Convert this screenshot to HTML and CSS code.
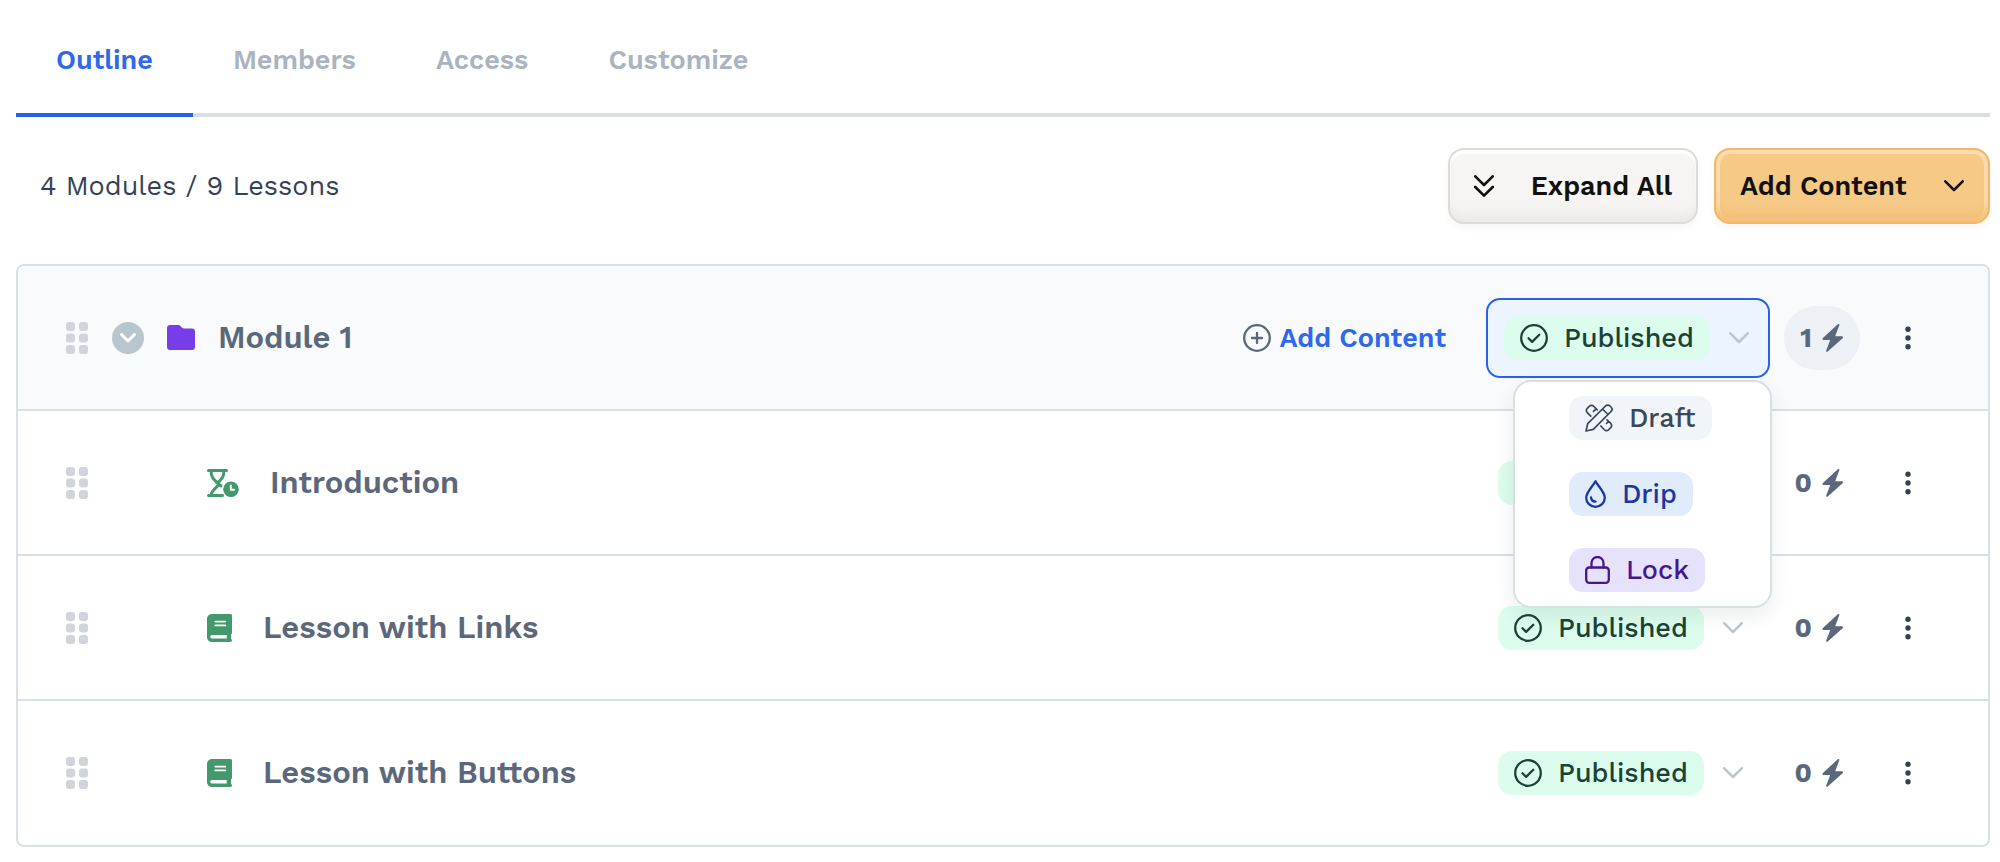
FILE: index.html
```html
<!DOCTYPE html>
<html lang="en">

<head>
  <meta charset="utf-8">
  <title>Outline</title>
  <link rel="stylesheet" href="styles.css">
</head>

<body>
  <!-- shared icons -->
  <svg class="sprite" aria-hidden="true">
    <symbol id="grip" viewBox="0 0 22 32">
      <rect x="0" y="0" width="9" height="9" rx="3" />
      <rect x="13" y="0" width="9" height="9" rx="3" />
      <rect x="0" y="11.5" width="9" height="9" rx="3" />
      <rect x="13" y="11.5" width="9" height="9" rx="3" />
      <rect x="0" y="23" width="9" height="9" rx="3" />
      <rect x="13" y="23" width="9" height="9" rx="3" />
    </symbol>
    <symbol id="check" viewBox="0 0 28 28">
      <circle cx="14" cy="14" r="12.8" />
      <path d="M8.500 14.300l3.600 3.600 7.200-7.200" />
    </symbol>
    <symbol id="chevron" viewBox="0 0 20 12">
      <path d="M1.300 1.300L10 10l8.700-8.700" />
    </symbol>
    <symbol id="bolt" viewBox="0 0 22 28">
      <path d="M17.300 1.200c.4-1-.7-1.700-1.500-1L.9 14.100c-.8.800-.4 2 .8 2h6.500l-4 10.500c-.4 1 .7 1.700 1.500 1l14.900-13.400c.8-.8.4-2-.8-2h-6.600z" />
    </symbol>
    <symbol id="dots" viewBox="0 0 6 24">
      <circle cx="3" cy="3.200" r="2.700" />
      <circle cx="3" cy="12" r="2.700" />
      <circle cx="3" cy="20.800" r="2.700" />
    </symbol>
    <symbol id="book" viewBox="0 0 25 28">
      <path fill-rule="evenodd" d="M5 0h18.300C24.300 0 25 .7 25 1.600v17.300c0 .7-.4 1.200-1 1.400v4.600c.6.2 1 .8 1 1.400 0 1-.7 1.700-1.700 1.700H5c-2.800 0-5-2.200-5-5V5c0-2.800 2.200-5 5-5zM8.300 6.700a.9.9 0 0 0 0 1.800h10a.9.9 0 0 0 0-1.800zm0 3.800a.9.9 0 0 0 0 1.800h10a.9.9 0 0 0 0-1.800zM5 21a1.800 1.800 0 0 0 0 3.600h14.700V21z" />
    </symbol>
  </svg>

  <nav class="tabs">
    <a class="tab active" href="#outline">Outline</a>
    <a class="tab" href="#members">Members</a>
    <a class="tab" href="#access">Access</a>
    <a class="tab" href="#customize">Customize</a>
  </nav>

  <div class="toolbar">
    <div class="summary">4 Modules / 9 Lessons</div>
    <button class="btn btn-expand" type="button">
      <svg class="icon-double" viewBox="0 0 20 22"><path d="M1.300 1.300L10 10l8.700-8.700M1.300 12L10 20.700l8.700-8.700" /></svg>
      Expand All
    </button>
    <button class="btn btn-add" type="button">
      Add Content
      <svg class="icon-chevron"><use href="#chevron" /></svg>
    </button>
  </div>

  <main class="outline">
    <div class="row module">
      <svg class="grip"><use href="#grip" /></svg>
      <button class="toggle" type="button" aria-label="Collapse module">
        <svg viewBox="0 0 16 10"><path d="M1.500 1.500L8 8l6.500-6.500" /></svg>
      </button>
      <svg class="folder" viewBox="0 0 28 25"><path d="M3 0h8.500c.8 0 1.500.3 2 .9l1.700 1.900c.5.500 1.200.8 1.900.8H25c1.700 0 3 1.300 3 3V22c0 1.700-1.300 3-3 3H3c-1.700 0-3-1.300-3-3V3c0-1.700 1.300-3 3-3z" /></svg>
      <h2 class="title">Module 1</h2>
      <a class="add-link" href="#add">
        <svg viewBox="0 0 28 28"><circle cx="14" cy="14" r="12.800" /><path d="M14 9v10M9 14h10" /></svg>
        Add Content
      </a>
      <div class="status-wrapper">
        <button class="status open" type="button" aria-haspopup="listbox" aria-expanded="true">
          <span class="badge published"><svg class="icon"><use href="#check" /></svg>Published</span>
          <svg class="icon-chevron"><use href="#chevron" /></svg>
        </button>
        <ul class="menu" role="listbox" aria-label="Status">
          <li role="option">
            <span class="badge draft">
              <svg class="icon icon-draft" viewBox="0 0 28 28"><path d="M1 27l1.700-7.300L20.500 2c1.300-1.300 3.200-1.300 4.500 0l1 1c1.300 1.300 1.300 3.200 0 4.500L8.300 25.300zM17.500 5l5.500 5.500M5.800 12.200L2.500 8.900C.9 7.300.9 5.700 2.500 4.100l1.600-1.600c1.600-1.600 3.200-1.600 4.800 0l3.300 3.300M8.500 7.300l2-2M22 15.800l3.500 3.300c1.600 1.600 1.600 3.200 0 4.800l-1.600 1.600c-1.600 1.600-3.200 1.600-4.800 0L15.800 22M23.500 17.500l-2 2" /></svg>Draft
            </span>
          </li>
          <li role="option">
            <span class="badge drip">
              <svg class="icon icon-drip" viewBox="0 0 21 28"><path d="M10.500 1.200C8 6 1.200 12 1.200 17.700c0 5.100 4.200 9.100 9.300 9.100s9.300-4 9.300-9.100C19.800 12 13 6 10.500 1.200zM6 17.500c.3 2.400 1.800 3.900 4.500 4.200" /></svg>Drip
            </span>
          </li>
          <li role="option">
            <span class="badge lock">
              <svg class="icon icon-lock" viewBox="0 0 25 28"><rect x="1.200" y="11.500" width="22.600" height="15.300" rx="3" /><path d="M6.500 11.500V7a6 6 0 0 1 12 0v4.500" /></svg>Lock
            </span>
          </li>
        </ul>
      </div>
      <span class="count filled">1<svg class="bolt"><use href="#bolt" /></svg></span>
      <button class="more" type="button" aria-label="More options"><svg><use href="#dots" /></svg></button>
    </div>

    <div class="row">
      <svg class="grip"><use href="#grip" /></svg>
      <svg class="hourglass" viewBox="0 0 32 28">
        <path class="glass" d="M1.500 1.500h18M4 1.500c0 7 3 9 6.500 12.500S4 20 4 26.500M17 1.500c0 7-3 9-6.500 12.500l3.500 3M1.500 26.500h14" />
        <circle cx="24" cy="20.300" r="7.800" />
        <path class="hands" d="M23.800 16.500v4.300h3.200" />
      </svg>
      <h3 class="title">Introduction</h3>
      <button class="status" type="button" aria-haspopup="listbox">
        <span class="badge published"><svg class="icon"><use href="#check" /></svg>Published</span>
        <svg class="icon-chevron"><use href="#chevron" /></svg>
      </button>
      <span class="count">0<svg class="bolt"><use href="#bolt" /></svg></span>
      <button class="more" type="button" aria-label="More options"><svg><use href="#dots" /></svg></button>
    </div>

    <div class="row">
      <svg class="grip"><use href="#grip" /></svg>
      <svg class="book"><use href="#book" /></svg>
      <h3 class="title">Lesson with Links</h3>
      <button class="status" type="button" aria-haspopup="listbox">
        <span class="badge published"><svg class="icon"><use href="#check" /></svg>Published</span>
        <svg class="icon-chevron"><use href="#chevron" /></svg>
      </button>
      <span class="count">0<svg class="bolt"><use href="#bolt" /></svg></span>
      <button class="more" type="button" aria-label="More options"><svg><use href="#dots" /></svg></button>
    </div>

    <div class="row">
      <svg class="grip"><use href="#grip" /></svg>
      <svg class="book"><use href="#book" /></svg>
      <h3 class="title">Lesson with Buttons</h3>
      <button class="status" type="button" aria-haspopup="listbox">
        <span class="badge published"><svg class="icon"><use href="#check" /></svg>Published</span>
        <svg class="icon-chevron"><use href="#chevron" /></svg>
      </button>
      <span class="count">0<svg class="bolt"><use href="#bolt" /></svg></span>
      <button class="more" type="button" aria-label="More options"><svg><use href="#dots" /></svg></button>
    </div>
  </main>
</body>

</html>
```
FILE: styles.css
```css
* {
  box-sizing: border-box;
}

body {
  margin: 0;
  padding: 0 10px 14px 16px;
  background: #fff;
  color: #334155;
  font-family: 'Work Sans', Inter, sans-serif;
  font-size: 27px;
  line-height: 32px;
}

button {
  padding: 0;
  border: 0;
  background: none;
  color: inherit;
  font: inherit;
}

a {
  text-decoration: none;
}

svg {
  flex: none;
  fill: none;
  stroke: currentColor;
  stroke-width: 2.3;
  stroke-linecap: round;
  stroke-linejoin: round;
}

.sprite {
  display: none;
}

/* tabs */

.tabs {
  display: flex;
  border-bottom: 4px solid #d8e0e5;
}

.tab {
  margin-bottom: -4px;
  padding: 44px 40px 37px;
  border-bottom: 4px solid transparent;
  color: #aab4c0;
  font-weight: 600;
}

.tab.active {
  border-color: #2563eb;
  color: #2f68ed;
}

/* toolbar */

.toolbar {
  display: flex;
  align-items: center;
  gap: 16px;
  padding: 31px 0 40px;
}

.summary {
  flex: 1;
  padding-left: 24px;
}

.btn {
  display: flex;
  align-items: center;
  justify-content: space-between;
  height: 76px;
  padding: 0 24px;
  border: 2px solid #dedad7;
  border-radius: 16px;
  color: #11110f;
  font-weight: 600;
}

.btn-expand {
  min-width: 250px;
  background: #f6f5f4;
  box-shadow: inset 0 -12px 12px -6px #e9e7e5, inset 0 4px 2px #fff, 0 4px 8px rgba(0, 0, 0, .04);
}

.btn-add {
  min-width: 276px;
  border-color: #f4b664;
  background: #f6c987;
  box-shadow: inset 0 -12px 12px -6px #f4b96b, inset 0 0 0 4px #fadcb1, 0 4px 8px rgba(0, 0, 0, .04);
}

.icon-double {
  width: 20px;
  height: 22px;
  stroke-width: 2.6;
}

.icon-chevron {
  width: 20px;
  height: 12px;
  stroke-width: 2.6;
}

/* module outline */

.outline {
  border: 2px solid #d8e0e5;
  border-radius: 8px;
}

.row {
  display: flex;
  align-items: center;
  height: 145px;
  padding: 0 63px 0 48px;
  border-bottom: 2px solid #d8e0e5;
}

.row:last-child {
  height: 144px;
  border-bottom: 0;
}

.module {
  border-radius: 6px 6px 0 0;
  background: #f8fafc;
}

.grip {
  width: 22px;
  height: 32px;
  margin-right: 24px;
  fill: #d1d5db;
  stroke: none;
}

.toggle {
  display: flex;
  align-items: center;
  justify-content: center;
  width: 32px;
  height: 32px;
  margin-right: 23px;
  border-radius: 50%;
  background: #b8c5cd;
  color: #fff;
}

.toggle svg {
  width: 16px;
  height: 10px;
  stroke-width: 3;
}

.folder {
  width: 28px;
  height: 25px;
  fill: #773dea;
  stroke: none;
}

.title {
  flex: 1;
  margin: 0;
  padding-left: 23px;
  color: #5b687b;
  font-size: 31px;
  font-weight: 600;
}

.hourglass,
.book {
  height: 28px;
  margin-left: 95px;
  fill: #43996b;
  stroke: none;
}

.hourglass {
  width: 32px;
}

.book {
  width: 25px;
}

.hourglass ~ .title,
.book ~ .title {
  padding-left: 31px;
}

.glass {
  fill: none;
  stroke: #43996b;
  stroke-width: 3;
}

.hands {
  fill: none;
  stroke: #fff;
  stroke-width: 2;
}

.add-link {
  display: flex;
  align-items: center;
  gap: 8px;
  margin-right: 40px;
  color: #2f68ed;
  font-weight: 600;
}

.add-link svg {
  width: 28px;
  height: 28px;
  color: #5b687b;
}

/* status select */

.status-wrapper {
  position: relative;
}

.status {
  display: flex;
  align-items: center;
  justify-content: space-between;
  width: 284px;
  height: 80px;
  padding: 0 27px 0 12px;
  border-radius: 14px;
}

.status.open {
  padding: 0 19px 0 16px;
  border: 2px solid #2563eb;
  background: #ebf4ff;
}

.status .icon-chevron {
  color: #bcc7d0;
}

.badge {
  display: inline-flex;
  align-items: center;
  gap: 16px;
  height: 44px;
  padding: 0 16px;
  border-radius: 14px;
  font-weight: 500;
}

.icon {
  width: 28px;
  height: 28px;
}

.icon-draft {
  stroke-width: 1.7;
}

.icon-drip {
  width: 21px;
}

.icon-lock {
  width: 25px;
}

.published {
  background: #dcfced;
  color: #1a4335;
}

.draft {
  background: #f1f5f9;
  color: #3b475a;
}

.drip {
  background: #e0ebfc;
  color: #1b37a5;
}

.lock {
  background: #e6e2fb;
  color: #45178c;
}

.menu {
  position: absolute;
  z-index: 1;
  top: 82px;
  right: -2px;
  display: flex;
  flex-direction: column;
  gap: 32px;
  width: 259px;
  margin: 0;
  padding: 14px 54px;
  border: 2px solid #d8e0e5;
  border-radius: 18px;
  background: #fff;
  box-shadow: 0 8px 20px rgba(15, 23, 42, .08);
  list-style: none;
}

.menu li {
  display: flex;
}

/* counters */

.count {
  display: flex;
  align-items: center;
  justify-content: flex-end;
  gap: 10px;
  width: 76px;
  height: 64px;
  margin: 0 31px 0 14px;
  padding-right: 16px;
  border-radius: 32px;
  color: #5b687b;
  font-weight: 700;
}

.count.filled {
  background: #edf0f5;
}

.bolt {
  width: 22px;
  height: 28px;
  fill: currentColor;
  stroke: none;
}

.more {
  display: flex;
  justify-content: center;
  width: 34px;
  height: 24px;
}

.more svg {
  width: 6px;
  height: 24px;
  fill: #334155;
  stroke: none;
}
```
